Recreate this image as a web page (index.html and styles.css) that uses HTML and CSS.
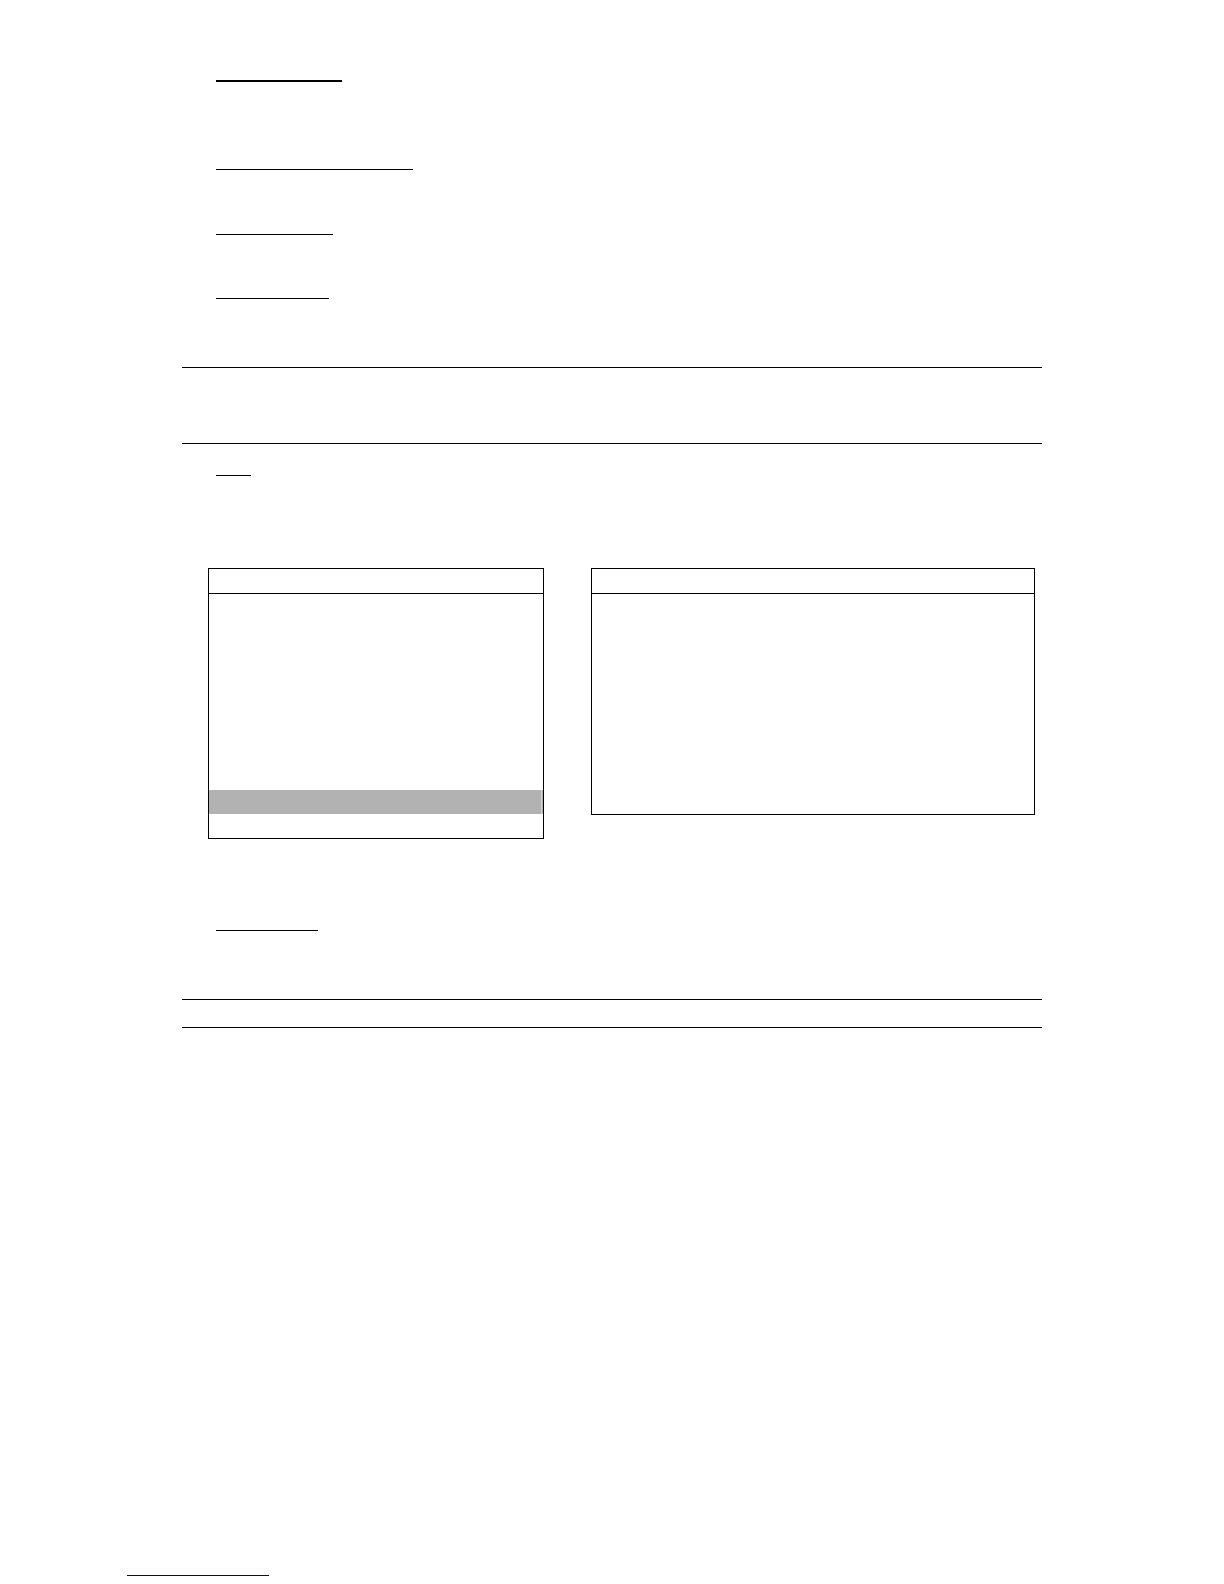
FILE: index.html
```
<!DOCTYPE html>
<html lang="en">
  <head>
    <meta charset="UTF-8" />
    <meta name="viewport" content="width=device-width, initial-scale=1.0" />
    <title>Document</title>
    <link rel="stylesheet" href="styles.css" />
  </head>
  <body>
    <main class="content">
      <section class="entry entry-title">
        <div class="underline underline-title"></div>
      </section>
      <section class="entry entry-first">
        <div class="underline underline-first"></div>
      </section>
      <section class="entry entry-second">
        <div class="underline underline-second"></div>
      </section>
      <section class="entry entry-last">
        <div class="underline underline-third"></div>
      </section>

      <div class="note note-tall"></div>

      <section class="entry entry-panels">
        <div class="underline underline-short"></div>
      </section>

      <div class="panels">
        <div class="panel panel-menu">
          <div class="panel-header"></div>
          <div class="panel-body"></div>
          <div class="panel-selected"></div>
          <div class="panel-row"></div>
        </div>
        <div class="panel panel-detail">
          <div class="panel-header"></div>
          <div class="panel-body"></div>
          <div class="panel-row"></div>
        </div>
      </div>

      <section class="entry entry-last">
        <div class="underline underline-fourth"></div>
      </section>

      <div class="note"></div>
    </main>

    <footer class="footer">
      <div class="footer-line"></div>
    </footer>
  </body>
</html>
```

FILE: styles.css
```
/* styles.css */
* {
  box-sizing: border-box;
}

body {
  display: flex;
  flex-direction: column;
  min-height: 100vh;
  margin: 0;
  font-family: "Liberation Sans", Arial, sans-serif;
  background-color: #fff;
}

.content {
  width: 100%;
  max-width: 860px;
  margin: 0 auto;
  padding-top: 80px;
}

/* Underlined entries */
.entry {
  min-height: 64px;
  padding-left: 34px;
}

.entry-title {
  min-height: 89px;
}

.entry-first {
  min-height: 65px;
}

.entry-last {
  min-height: 69px;
}

.entry-panels {
  min-height: 93px;
}

.underline {
  max-width: 100%;
  border-top: 1px solid #000;
}

.underline-title {
  width: 126px;
  border-top-width: 2px;
}

.underline-first {
  width: 197px;
}

.underline-second {
  width: 117px;
}

.underline-third {
  width: 113px;
}

.underline-short {
  width: 35px;
}

.underline-fourth {
  width: 102px;
}

/* Notes between two rules */
.note {
  min-height: 29px;
  border-top: 1px solid #000;
  border-bottom: 1px solid #000;
}

.note-tall {
  min-height: 77px;
  margin-bottom: 31px;
}

/* Panels */
.panels {
  display: flex;
  align-items: flex-start;
  gap: 47px;
  margin-bottom: 91px;
  padding: 0 7px 0 26px;
}

.panel {
  border: 1px solid #000;
}

.panel-menu {
  flex: 336 1 0;
}

.panel-detail {
  flex: 444 1 0;
}

.panel-header {
  height: 25px;
  border-bottom: 1px solid #000;
}

.panel-body {
  height: 196px;
}

.panel-row {
  height: 24px;
}

.panel-selected {
  display: flex;
  height: 24px;
  background-color: #d2d2d2;
}

.panel-selected::before {
  content: "";
  flex: 1;
  margin-right: 1px;
  background-color: #b2b2b2;
}

.panel-selected::after {
  content: "";
  width: 1px;
  background-color: #b2b2b2;
}

/* Footer */
.footer {
  margin-top: auto;
  padding: 0 127px 8px;
}

.footer-line {
  width: 142px;
  max-width: 100%;
  border-top: 1px solid #000080;
}
```
